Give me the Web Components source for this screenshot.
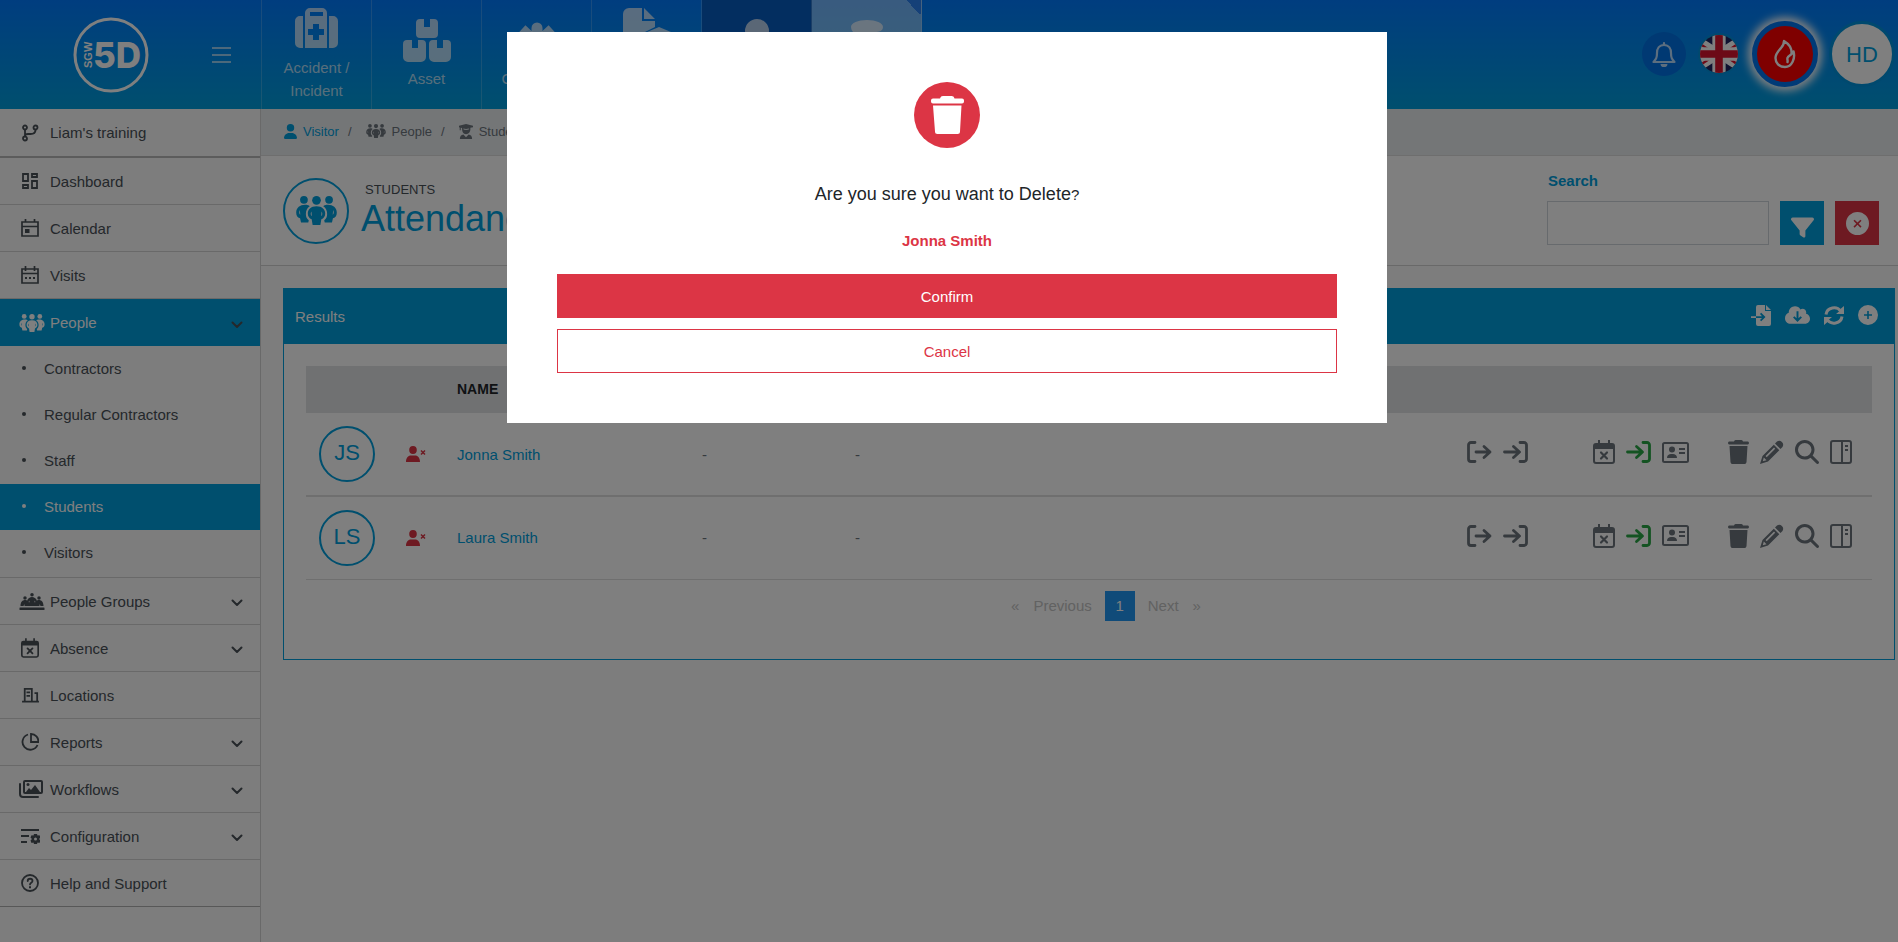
<!DOCTYPE html>
<html lang="en">
<head>
<meta charset="utf-8">
<title>Students - Attendance</title>
<style>
  html, body { margin: 0; height: 100%; }
  body {
    --brand: #009edc; --danger: #dc3545; --ink: #495057; --muted: #6c757d; --line: #d3d3d3;
    font: 15px/23px "Liberation Sans", Arial, sans-serif; color: #212529; background: #fafafa;
  }
</style>
</head>
<body>
<app-shell>
  <app-header slot="header">
    <nav-tile icon="medkit">Accident / Incident</nav-tile>
    <nav-tile icon="boxes">Asset</nav-tile>
    <nav-tile icon="virus">Contractor</nav-tile>
    <nav-tile icon="filebox" tall label="Documents"></nav-tile>
    <nav-tile icon="user" tone="dark" label="Visitor"></nav-tile>
    <nav-tile icon="disc" tone="light" label="More"></nav-tile>
  </app-header>
  <side-menu slot="menu">
    <side-item icon="branch" strong>Liam's training</side-item>
    <side-item icon="grid">Dashboard</side-item>
    <side-item icon="calendar">Calendar</side-item>
    <side-item icon="visits">Visits</side-item>
    <side-item icon="people" wide active more>People</side-item>
    <side-group>
      <side-sub>Contractors</side-sub>
      <side-sub>Regular Contractors</side-sub>
      <side-sub>Staff</side-sub>
      <side-sub active>Students</side-sub>
      <side-sub>Visitors</side-sub>
    </side-group>
    <side-item icon="groups" wide more>People Groups</side-item>
    <side-item icon="calx" more>Absence</side-item>
    <side-item icon="building">Locations</side-item>
    <side-item icon="pie" more>Reports</side-item>
    <side-item icon="images" wide more>Workflows</side-item>
    <side-item icon="config" more>Configuration</side-item>
    <side-item icon="help" last>Help and Support</side-item>
  </side-menu>
  <bread-crumbs></bread-crumbs>
  <page-title>
    <span slot="section">STUDENTS</span>
    Attendance
  </page-title>
  <results-card>
    <person-table></person-table>
    <page-nav></page-nav>
  </results-card>
</app-shell>
<confirm-dialog>
  <span slot="question">Are you sure you want to Delete</span>
  Jonna Smith
</confirm-dialog>

<script>
const S = 'fill="none" stroke="currentColor" stroke-linecap="round" stroke-linejoin="round"';
const ICONS = {
  menu: ['19 18', '<path d="M0 2h19M0 9h19M0 16h19" stroke="currentColor" stroke-width="2"/>'],
  medkit: ['43 40', '<path fill-rule="evenodd" d="M10 40V5a5 5 0 0 1 5-5h12a5 5 0 0 1 5 5v35zM15 4v4h13V4zM18 16v5h-5v6h5v5h6v-5h5v-6h-5v-5zM0 13a5 5 0 0 1 5-5h3v32H5a5 5 0 0 1-5-5zM34 8h4a5 5 0 0 1 5 5v22a5 5 0 0 1-5 5h-4z"/>'],
  boxes: ['48 43', '<path d="M13 4a4 4 0 0 1 4-4h4v8h6V0h4a4 4 0 0 1 4 4v11a4 4 0 0 1-4 4H17a4 4 0 0 1-4-4zM0 25a4 4 0 0 1 4-4h5v8h6v-8h4a4 4 0 0 1 4 4v13a5 5 0 0 1-5 5H5a5 5 0 0 1-5-5zM26 25a4 4 0 0 1 4-4h4v8h6v-8h4a4 4 0 0 1 4 4v13a5 5 0 0 1-5 5H31a5 5 0 0 1-5-5z"/>'],
  virus: ['48 48', '<path stroke="currentColor" stroke-width="11" stroke-linecap="round" d="M24 9v32"/><path stroke="currentColor" stroke-width="10" d="M9 10l30 28M39 10L9 38M5 26h38"/>'],
  filebox: ['48 48', '<path d="M0 6a6 6 0 0 1 6-6h13v13h13v6L22 24v24H6a6 6 0 0 1-6-6zM21 0l11 11H21zM24 24l12-5 12 5v18l-12 6-12-6z"/>'],
  disc: ['48 48', '<path d="M24 1c9 0 16 3 16 7s-4 5-8 5c-5 0 0 4-4 6-12 0-20-5-20-11 0-4 7-7 16-7z"/>'],
  user: ['448 512', '<path d="M224 256A128 128 0 1 0 224 0a128 128 0 1 0 0 256zm-45.700 48C79.800 304 0 383.800 0 482.300C0 498.700 13.300 512 29.700 512H418.300c16.400 0 29.700-13.300 29.700-29.700C448 383.800 368.200 304 269.700 304H178.300z"/>'],
  bell: ['24 26', `<path ${S} stroke-width="2.200" d="M12 2v2M12 4c-5 0-7 4-7 8 0 5-1 6-3.500 9h21C20 18 19 17 19 12c0-4-2-8-7-8z"/><path d="M8.500 23h7a3.500 3.200 0 0 1-7 0z"/>`],
  flame: ['22 30', `<path ${S} stroke-width="2.400" d="M10 2c5 3 8 8 7.500 13 1-.7 1.600-1.500 2-2.600 2 7-1.500 15.600-8.500 15.600-6 0-9.500-4-9.500-9 0-4.500 3-7 5.500-10C9 7 10 5 10 2zM17.500 15c-1 1.500-3.500 2-4 4-.5 1.500.5 2.500 0 4"/>`],
  people: ['42 30', '<circle cx="8" cy="4" r="4"/><circle cx="34" cy="4" r="4"/><circle cx="21" cy="4.500" r="4.500"/><path fill-rule="evenodd" d="M9 9c3 0 4 .6 5 1.500-3 2-4 5-4 8 0 3 1 5 3 6.500l-.5 2.500H5L4 23c-3-1-4-3-4-6 0-5 4-8 9-8zM3.800 14.500c-1 2-.8 4 .4 5zM33 9c-3 0-4 .6-5 1.500 3 2 4 5 4 8 0 3-1 5-3 6.500l.5 2.500H37l1-4.500c3-1 4-3 4-6 0-5-4-8-9-8zM38.200 14.500c1 2 .8 4-.4 5zM21 10.500c6 0 9 3.500 9 7.500 0 3-1.500 5-4 6l-1 6h-8l-1-6c-2.500-1-4-3-4-6 0-4 3-7.500 9-7.500zM15.800 16c-1.200 1.500-1 4 .3 5zM26.200 16c1.200 1.500 1 4-.3 5z"/>'],
  groups: ['50 34', '<circle cx="25" cy="3.500" r="3.500"/><circle cx="11" cy="10" r="3.500"/><circle cx="39" cy="10" r="3.500"/><path d="M15 16c2-6 6-8 10-8s8 2 10 8l-3 2-2-3v7H20v-7l-2 3zM2 26c0-8 4-12 9-12 3 0 5 1 7 4l3 2 4 1 4-1 3-2c2-3 4-4 7-4 5 0 9 4 9 12h-6l-2-4v4H10v-4l-2 4zM1 29h48a1 1 0 0 1 1 1v3a1 1 0 0 1-1 1H1a1 1 0 0 1-1-1v-3a1 1 0 0 1 1-1z"/>'],
  grad: ['16 17', '<path fill-rule="evenodd" d="M0 2l8-2 8 2v1.500l-3 .8V6c0 3-2 5.500-5 5.500S3.500 9 3.500 6V4.500L2 4.200V7H.8V3.800L0 3.500zM5 6c1 1 5 1 6.500 0V5L8 5.700 5 5zM1 17c0-3 1.500-4.500 4-5l3 3 3-3c2.500.5 4 2 4 5z"/>'],
  branch: ['18 18', `<g ${S} stroke-width="1.800"><circle cx="4" cy="3.500" r="2"/><circle cx="14.500" cy="3.500" r="2"/><circle cx="4" cy="14.500" r="2"/><path d="M4 6v6M14.500 6c0 3-2 4-5 4H7c-2 0-3 .5-3 2"/></g>`],
  grid: ['18 18', '<path fill="none" stroke="currentColor" stroke-width="1.800" d="M2 2h5v7H2zM11 2h5v3h-5zM11 9h5v7h-5zM2 13h5v3H2z"/>'],
  calendar: ['18 18', '<path fill="none" stroke="currentColor" stroke-width="1.700" d="M1 3h16v14H1zM1 7.500h16M4.500 0v3M13.500 0v3"/><path d="M4 10h4.500v4H4z"/>'],
  visits: ['18 18', '<path fill="none" stroke="currentColor" stroke-width="1.700" d="M1 3h16v14H1zM1 7.500h16M4.500 0v5M13.500 0v5"/><path d="M4 11h2v2H4zM8 11h2v2H8zM12 11h2v2h-2z"/>'],
  calx: ['22 24', `<path fill-rule="evenodd" d="M5 0h2v3h8V0h2v3h2a3 3 0 0 1 3 3v15a3 3 0 0 1-3 3H3a3 3 0 0 1-3-3V6a3 3 0 0 1 3-3h2zM2 9v12a1 1 0 0 0 1 1h16a1 1 0 0 0 1-1V9z"/><path ${S} stroke-width="2.200" d="M8 12.500l6 6M14 12.500l-6 6"/>`],
  building: ['19 18', '<path fill="none" stroke="currentColor" stroke-width="2" d="M0 16.500h19M3 16V2h8v14M14 7h3v9M5 6h4M5 10h4"/>'],
  pie: ['18 18', '<path fill="none" stroke="currentColor" stroke-width="1.800" d="M7 1.500a7.800 7.800 0 1 0 9.500 10.500M10 1v8h7.500c0-4.500-3-8-7.500-8z"/>'],
  images: ['24 18', '<path fill="none" stroke="currentColor" stroke-width="2" stroke-linecap="round" d="M6 1h16a1 1 0 0 1 1 1v10a1 1 0 0 1-1 1H6a1 1 0 0 1-1-1V2a1 1 0 0 1 1-1zM1 4v10a3 3 0 0 0 3 3h15"/><circle cx="9" cy="4.500" r="1.500"/><path d="M7 12l3-4 2 2 4-5 5 7z"/>'],
  config: ['19 16', '<path d="M0 1h18v2H0zM0 7h8v2H0zM0 13h6v2H0z"/><path fill-rule="evenodd" d="M13 6h3l.5 1.500 2-.3 1 2.300L18 11l1.500 1.500-1 2.500-2-.5L16 16h-3l-.5-1.500-2 .5-1-2.500L11 11 9.500 9.500l1-2.300 2 .3zM14.500 9.500a1.500 1.500 0 1 0 0 3 1.500 1.500 0 0 0 0-3z"/>'],
  help: ['18 18', `<circle cx="9" cy="9" r="8" fill="none" stroke="currentColor" stroke-width="1.800"/><path ${S} stroke-width="1.800" d="M6.700 7c0-3 4.800-3 4.800 0 0 1.700-2.500 1.800-2.500 3.400"/><path d="M8 12.200h2v2H8z"/>`],
  chevron: ['12 8', `<path ${S} stroke-width="2" d="M1.500 1.500L6 6l4.500-4.500"/>`],
  filter: ['512 512', '<path d="M4 55C10 41 24 32 40 32H472c16 0 30 9 36 23s5 30-5 42L320 321V448c0 12-7 23-18 29s-24 4-33-3l-64-48c-8-6-13-16-13-26V321L9 97C-1 85-3 69 4 55z"/>'],
  circlex: ['24 24', `<path fill-rule="evenodd" d="M12 0a12 12 0 1 0 0 24 12 12 0 0 0 0-24zM9 8l3 3 3-3 1.200 1.200-3 3 3 3L15 16.400l-3-3-3 3-1.200-1.200 3-3-3-3z"/>`],
  circleplus: ['20 20', '<path fill-rule="evenodd" d="M10 0a10 10 0 1 0 0 20 10 10 0 0 0 0-20zM9.200 6h1.600v3.200H14v1.600h-3.200V14H9.200v-3.200H6V9.200h3.200z"/>'],
  import: ['20 21', '<path fill-rule="evenodd" d="M5 2a2 2 0 0 1 2-2h7v6h6v13a2 2 0 0 1-2 2H7a2 2 0 0 1-2-2v-6h6l-2 2 1.200 1.200L14.500 12l-4.300-4.300L9 9l2 2.200H5zM0 11.200h5V13H0zM15 0l5 5h-5z"/>'],
  cloud: ['640 448', '<path fill-rule="evenodd" d="M144 448C64 448 0 384 0 304c0-63 40-116 96-136v-8C96 72 168 0 256 0c59 0 111 32 139 80 15-10 33-16 53-16 53 0 96 43 96 96 0 12-2 24-6 35 58 12 102 63 102 125 0 71-57 128-128 128zM295 130v180l-55-54-34 34 114 112 114-112-34-34-55 54V130z"/>'],
  sync: ['20 19', `<g fill="none" stroke="currentColor" stroke-width="3"><path d="M2 8.500C3 1 13 0 16.500 5M18 10.500c-1 7.500-11 8.500-14.500 3.500"/></g><path d="M20 0v8h-8l3-2.500 2-3zM0 19v-8h8l-3 2.500-2 3z"/>`],
  userx: ['20 16', `<path d="M7 0a3.800 4 0 1 1 0 8 3.800 4 0 0 1 0-8zM0 16c0-4 2-6.500 5-6.500h4c3 0 5 2.500 5 6.500z"/><path d="M15 4.500l4 4M19 4.500l-4 4" stroke="currentColor" stroke-width="1.500"/>`],
  out: ['25 22', `<path ${S} stroke-width="2.800" d="M8 1.500H4A2.500 2.500 0 0 0 1.500 4v14A2.500 2.500 0 0 0 4 20.500h4M9 11h14M17 5.500l6 5.500-6 5.500"/>`],
  in: ['25 22', `<path ${S} stroke-width="2.800" d="M17 1.500h4A2.500 2.500 0 0 1 23.500 4v14a2.500 2.500 0 0 1-2.500 2.500h-4M1.500 11H16M10.500 5.500l6 5.500-6 5.500"/>`],
  card: ['27 21', `<rect x="1" y="1" width="25" height="19" rx="1.500" fill="none" stroke="currentColor" stroke-width="2"/><circle cx="10" cy="7.500" r="3"/><path d="M5 16c0-3 2-4 4-4h2c2 0 4 1 4 4zM17 6h6v2h-6zM17 10h6v2h-6z"/>`],
  trash: ['448 512', '<path d="M135 18L128 32H32C14 32 0 46 0 64S14 96 32 96H416c18 0 32-14 32-32s-14-32-32-32H320l-7-14C307 7 296 0 284 0H164c-12 0-23 7-29 18zM416 128H32L53 467c2 25 23 45 48 45H347c25 0 46-20 48-45L416 128z"/>'],
  bin: ['33 38', '<path d="M2 2.500h7C9.500.8 10.500 0 12 0h8.500C22 0 23 .8 23.500 2.500H31a2 2 0 0 1 2 2v1A2 2 0 0 1 31 7.500H2a2 2 0 0 1-2-2v-1a2 2 0 0 1 2-2zM2 9.500h28.500l-1.500 26a2.500 2.500 0 0 1-2.500 2.500H6.500A2.500 2.500 0 0 1 4 35.500z"/>'],
  pencil: ['24 24', '<path fill-rule="evenodd" d="M17 1.500a4 4 0 0 1 5.500 5.500L20.500 9 15 3.500zM13.800 4.700l5.500 5.500L8 21.500 0 24l2.500-8zM14 7.500L5.500 16l1.200 1.200L15.200 8.700zM3.800 17.500l-1 3.700 3.700-1z"/>'],
  search: ['512 512', '<path d="M416 208c0 46-15 88-40 123L503 457c12 13 12 33 0 46s-33 12-46 0L331 376c-35 25-77 40-123 40C93 416 0 323 0 208S93 0 208 0S416 93 416 208zM208 352a144 144 0 1 0 0-288 144 144 0 1 0 0 288z"/>'],
  panel: ['22 24', '<path fill="none" stroke="currentColor" stroke-width="2" d="M3 1h16a2 2 0 0 1 2 2v18a2 2 0 0 1-2 2H3a2 2 0 0 1-2-2V3a2 2 0 0 1 2-2zM12 1v22"/><path d="M15 5h3v2h-3zM15 9h3v2h-3z"/>'],
  flag: ['40 40', '<path fill="#1e2560" d="M0 0h40v40H0z"/><path stroke="#fff" stroke-width="9" d="M-8 2L48 38M48 2L-8 38"/><path stroke="#d8152f" stroke-width="2.500" d="M-8 4L16 20M24 20L48 4M-8 37L16 21M24 20L48 37"/><path stroke="#fff" stroke-width="14" d="M20 0v40M0 20h40"/><path stroke="#d8152f" stroke-width="8" d="M20 0v40M0 20h40"/>']
};

const RESET = `<style>
  :host,*{box-sizing:border-box}
  a{color:inherit;text-decoration:none}
  button{font:inherit;border:0;padding:0;background:none;color:inherit;cursor:pointer}
</style>`;

class Base extends HTMLElement {
  connectedCallback() {
    if (this.shadowRoot) return;
    const t = document.createElement('template');
    t.innerHTML = RESET + this.view();
    this.attachShadow({ mode: 'open' }).append(t.content.cloneNode(true));
  }
}
const define = (name, view) => customElements.define(name, class extends Base { view() { return view(this); } });
const icon = (name, w, h) => `<ui-icon name="${name}" w="${w}" h="${h}"></ui-icon>`;

define('ui-icon', el => {
  const [box, body] = ICONS[el.getAttribute('name')];
  return `<style>:host{display:inline-flex;flex:none}svg{display:block}</style>
  <svg width="${el.getAttribute('w')}" height="${el.getAttribute('h')}" viewBox="0 0 ${box}" fill="currentColor" aria-hidden="true">${body}</svg>`;
});

define('app-shell', () => `<style>
  :host{display:flex;flex-direction:column;min-height:100vh}
  .cols{flex:1;display:grid;grid-template-columns:261px minmax(0,1fr)}
  main{min-width:0}
</style><slot name="header"></slot><div class="cols"><slot name="menu"></slot><main><slot></slot></main></div>`);

define('app-header', () => `<style>
  :host{display:flex;height:109px;color:#fff;background:linear-gradient(#007bff,#009edc)}
  .brand{width:261px;flex:none;display:flex;align-items:center;justify-content:space-between;padding:0 30px 0 73px}
  .brand svg{display:block}
  .brand button{display:flex;opacity:.6}
  nav{display:flex;border-left:1px solid rgba(255,255,255,.2)}
  .tools{margin-left:auto;display:flex;align-items:center;padding:0 3px 1px 0}
  .tools button{display:grid;place-items:center;border-radius:50%}
  .bell{width:44px;height:44px;background:#0072e6;margin-right:12px;color:#b9dcff}
  .flag{width:42px;height:42px;border:2px solid #0092dc;overflow:hidden;margin-right:12px}
  .fire{width:66px;height:66px;border:5px solid #0074ee;background:#f00;box-shadow:0 0 8px 4px #fff;margin-right:11px}
  .me{width:66px;height:66px;border:3px solid #0092dc;background:#fff;color:var(--brand);font-size:22px}
</style>
<div class="brand">
  <svg width="76" height="76" viewBox="0 0 76 76" role="img" aria-label="SGW 5D"><circle cx="38" cy="38" r="36" fill="none" stroke="#fff" stroke-width="3"/>
  <text x="20" y="51" font-family="Inter, sans-serif" font-weight="800" font-size="35" fill="#fff">5D</text>
  <text transform="translate(19 51) rotate(-90)" font-family="Liberation Sans, sans-serif" font-weight="700" font-size="11" fill="#fff">SGW</text></svg>
  <button aria-label="Toggle menu">${icon('menu', 19, 18)}</button>
</div>
<nav aria-label="Modules"><slot></slot></nav>
<div class="tools">
  <button class="bell" aria-label="Notifications">${icon('bell', 24, 26)}</button>
  <button class="flag" aria-label="Language">${icon('flag', 38, 38)}</button>
  <button class="fire" aria-label="Evacuation">${icon('flame', 22, 30)}</button>
  <button class="me">HD</button>
</div>`);

define('nav-tile', el => {
  const n = el.getAttribute('icon');
  const size = { medkit: [43, 40], boxes: [48, 43], user: [42, 48] }[n] || [48, 48];
  return `<style>
  :host{display:block;width:110px;position:relative;border-right:1px solid rgba(255,255,255,.2);color:rgba(255,255,255,.7)}
  :host([tone=dark]){background:#065cc0}
  :host([tone=light]){background:rgba(255,255,255,.45)}
  :host([tone=light])::after{content:"";position:absolute;top:0;right:0;width:15px;height:15px;background:linear-gradient(to top right,transparent 50%,#2a80f0 50%)}
  a{height:100%;display:flex;flex-direction:column;align-items:center;justify-content:center;text-align:center}
  .pic{height:48px;display:flex;align-items:start}
  .txt{min-height:23px;padding:0 10px}
  :host([tall]) .txt{min-height:46px}
  </style><a href="#" ${el.hasAttribute('label') ? `aria-label="${el.getAttribute('label')}"` : ''}><span class="pic">${icon(n, ...size)}</span><span class="txt"><slot></slot></span></a>`;
});

define('side-menu', () => `<style>:host{display:block;border-right:1px solid var(--line);color:var(--ink)}nav{display:block}</style><nav aria-label="Main"><slot></slot></nav>`);
define('side-item', el => {
  const n = el.getAttribute('icon');
  const size = { people: [26, 18], groups: [26, 17], images: [24, 18], calx: [18, 20], building: [19, 16], config: [19, 16] }[n] || [18, 18];
  return `<style>
  :host{display:block}
  a{display:flex;align-items:center;height:47px;padding:0 17px;border-bottom:1px solid var(--line)}
  :host([strong]) a{height:49px;border-bottom:2px solid #b8b8b8}
  :host([last]) a{border-color:#b0b0b0}
  :host([active]) a{background:var(--brand);color:#fff;border:0}
  .pic{width:26px;display:flex;justify-content:center;margin-right:7px}
  :host([wide]) .pic{justify-content:flex-start;margin:0 5px 0 2px}
  .more{margin-left:auto;color:var(--ink);padding-top:4px;display:flex}
  </style><a href="#"><span class="pic">${icon(n, ...size)}</span><slot></slot>${el.hasAttribute('more') ? `<span class="more">${icon('chevron', 12, 8)}</span>` : ''}</a>`;
});
define('side-group', () => `<style>:host{display:block;padding-bottom:1px;border-bottom:1px solid var(--line)}</style><slot></slot>`);
define('side-sub', () => `<style>:host{display:block}a{display:flex;align-items:center;height:46px;padding:0 0 1px 22px}
  i{width:4px;height:4px;border-radius:50%;background:currentColor;margin:0 18px 2px 0}
  :host([active]) a{background:var(--brand);color:#fff}</style><a href="#"><i></i><slot></slot></a>`);

define('bread-crumbs', () => `<style>
  :host{display:block;background:#e9ecef;border-bottom:1px solid #dcdcdc;font-size:13px;color:var(--muted)}
  nav{display:flex;align-items:center;height:46px;padding:0 22px 2px 23px}
  a{display:flex;align-items:center;gap:6px}
  .on{color:var(--brand)}
  b{font-weight:400;margin:0 14px 0 9px}
</style><nav aria-label="Breadcrumb"><a class="on" href="#">${icon('user', 13, 15)}Visitor</a><b>/</b><a href="#">${icon('people', 20, 14)}People</a><b>/</b><a href="#">${icon('grad', 14, 15)}Students</a></nav>`);

define('page-title', () => `<style>
  :host{display:flex;align-items:center;height:110px;padding:0 19px 0 22px;background:#fff;border-bottom:1px solid var(--line)}
  .ring{width:66px;height:66px;border:2px solid var(--brand);border-radius:50%;display:grid;place-items:center;color:var(--brand);flex:none}
  .names{padding:0 0 2px 12px}
  .sec{font-size:13px;line-height:18px;padding-left:4px;color:var(--ink)}
  h1{margin:0;font-size:36px;line-height:40px;font-weight:400;color:var(--brand)}
  form{margin-left:auto;padding-bottom:7px;display:grid;grid-template-columns:222px 44px 44px;column-gap:11px;row-gap:9px}
  label{grid-column:1/-1;font-weight:700;color:var(--brand);padding-left:1px}
  input{width:100%;height:44px;border:1px solid #ced4da;background:#fff;padding:0 12px;font:inherit}
  button{height:44px;display:grid;place-items:center;color:#fff}
  .go{background:var(--brand);padding-top:8px}
  .clear{background:var(--danger)}
</style>
<span class="ring">${icon('people', 41, 29)}</span>
<div class="names"><div class="sec"><slot name="section"></slot></div><h1><slot></slot></h1></div>
<form onsubmit="return false"><label for="q">Search</label><input id="q" type="text">
<button class="go" aria-label="Filter">${icon('filter', 23, 23)}</button><button class="clear" type="reset" aria-label="Clear">${icon('circlex', 23, 23)}</button></form>`);

define('results-card', () => `<style>
  :host{display:block;margin:22px 3px 22px 22px;background:#fff;border:1px solid var(--brand)}
  header{display:flex;align-items:center;height:55px;padding:0 16px 1px 11px;background:var(--brand);color:#fff}
  .acts{margin-left:auto;display:flex;align-items:center;gap:14px;padding-bottom:2px}
  .acts button{display:flex}
  .body{padding:22px 22px 38px}
</style>
<header><span>Results</span><div class="acts"><button aria-label="Import">${icon('import', 20, 21)}</button><button aria-label="Download">${icon('cloud', 25, 18)}</button><button aria-label="Refresh">${icon('sync', 20, 19)}</button><button aria-label="Add">${icon('circleplus', 20, 20)}</button></div></header>
<div class="body"><slot></slot></div>`);

define('person-table', () => {
  const row = (ini, name) => `<tr><td><span class="av">${ini}</span></td><td><span class="st">${icon('userx', 20, 16)}</span></td><td><a href="#">${name}</a></td><td>-</td><td>-</td>
  <td><div class="acts"><button aria-label="Sign out">${icon('out', 25, 22)}</button><button aria-label="Sign in">${icon('in', 25, 22)}</button><i></i>
  <button aria-label="Absence">${icon('calx', 22, 24)}</button><button class="ok" aria-label="Arrive">${icon('in', 25, 22)}</button><button aria-label="Badge">${icon('card', 27, 21)}</button><u></u>
  <button aria-label="Delete">${icon('trash', 21, 24)}</button><button aria-label="Edit">${icon('pencil', 24, 24)}</button><button aria-label="View">${icon('search', 24, 24)}</button><button aria-label="Panel">${icon('panel', 22, 24)}</button></div></td></tr>`;
  return `<style>
  :host{display:block}
  table{width:100%;border-collapse:collapse;table-layout:fixed}
  th{height:47px;background:#e0e2e5;font-size:14px;text-align:left;padding:0 13px}
  td{height:83px;padding:0 13px;border-bottom:1px solid #dedede;color:var(--muted)}
  tr:first-child td{border-bottom:2px solid #dedede}
  td a{color:var(--brand)}
  .c1{width:87px}.c2{width:51px}.c3{width:245px}.c4{width:153px}.c5{width:153px}
  .av{display:grid;place-items:center;width:56px;height:56px;border:2px solid var(--brand);border-radius:50%;color:var(--brand);font-size:22px;padding-bottom:3px}
  .st{color:var(--danger);display:flex}
  .acts{display:flex;align-items:center;justify-content:flex-end;gap:11px;padding:0 7px 4px 0}
  .acts button{display:flex}
  .acts i{width:43px}.acts u{width:17px}
  .ok{color:#28a745}
</style>
<table><colgroup><col class="c1"><col class="c2"><col class="c3"><col class="c4"><col class="c5"><col></colgroup>
<thead><tr><th></th><th></th><th>NAME</th><th></th><th></th><th></th></tr></thead>
<tbody>${row('JS', 'Jonna Smith')}${row('LS', 'Laura Smith')}</tbody></table>`;
});

define('page-nav', () => `<style>
  :host{display:block;padding:11px 0 0 34px}
  nav{display:flex;justify-content:center;align-items:center;color:#c4c4c4}
  a{padding:0 7px}
  .cur{width:30px;height:30px;padding:0;margin:0 6px;display:grid;place-items:center;background:#2196f3;color:#fff}
</style><nav aria-label="Pages"><a href="#">«</a><a href="#">Previous</a><a class="cur" href="#">1</a><a href="#">Next</a><a href="#">»</a></nav>`);

define('confirm-dialog', () => `<style>
  :host{position:fixed;inset:0;background:rgba(0,0,0,.5);display:flex;justify-content:center;align-items:flex-start;padding:32px 4px 32px 0}
  .box{width:880px;max-width:100%;background:#fff;padding:50px;text-align:center;display:flex;flex-direction:column;align-items:center}
  .badge{width:66px;height:66px;border-radius:50%;background:var(--danger);color:#fff;display:grid;place-items:center}
  h2{margin:35px 0 23px;font-size:15px;line-height:23px;font-weight:400}
  .ask{font-size:18px}
  .who{font-weight:700;color:var(--danger);margin-bottom:22px}
  button{width:100%;height:44px;border:1px solid var(--danger);color:var(--danger)}
  .yes{background:var(--danger);color:#fff;margin-bottom:11px}
</style>
<div class="box" role="dialog" aria-modal="true" aria-labelledby="t">
  <span class="badge">${icon('bin', 33, 38)}</span>
  <h2 id="t"><span class="ask"><slot name="question"></slot></span>?</h2>
  <div class="who"><slot></slot></div>
  <button class="yes">Confirm</button><button>Cancel</button>
</div>`);
</script>
</body>
</html>
